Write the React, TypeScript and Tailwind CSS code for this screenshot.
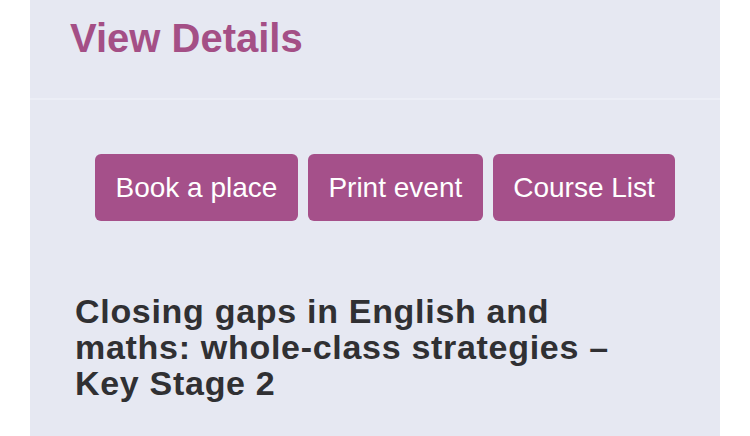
export default function App() {
  const buttons = ['Book a place', 'Print event', 'Course List']

  return (
    <div className="min-h-screen bg-white" style={{ fontFamily: '"Liberation Sans", Arial, sans-serif' }}>
      <div className="ml-[30px] w-[690px] h-[436px] bg-[#e6e8f2]">
        <div className="h-[100px] pt-[15px] pl-[40px] border-b-2 border-[#eceef6]">
          <h2 className="text-[40px] leading-[46px] font-bold text-[#a44f86]">View Details</h2>
        </div>

        <div className="mt-[54px] pl-[65px] flex gap-[10px]">
          {buttons.map((label) => (
            <button
              key={label}
              className="h-[67px] px-[20.5px] flex items-center rounded-[6px] bg-[#a5508a] text-white text-[28px] leading-none"
            >
              {label}
            </button>
          ))}
        </div>

        <h1 className="mt-[72px] pl-[45px] w-[620px] text-[34px] leading-[36px] font-bold tracking-[0.7px] text-[#303033]">
          Closing gaps in English and maths: whole-class strategies – Key Stage 2
        </h1>
      </div>
    </div>
  )
}
